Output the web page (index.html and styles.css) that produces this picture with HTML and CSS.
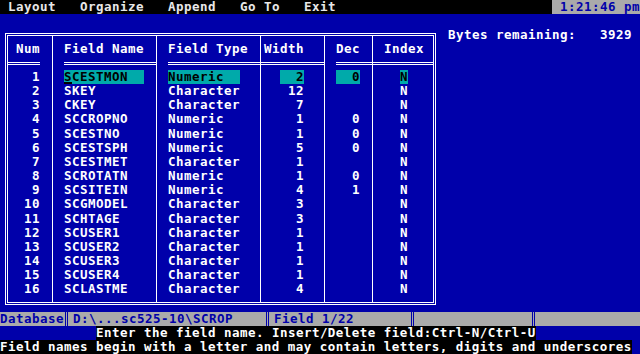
FILE: index.html
```html
<!DOCTYPE html>
<html lang="en">
<head>
    <meta charset="UTF-8">
    <title>Database Design</title>
    <link rel="stylesheet" href="styles.css">
</head>
<body>
    <div class="screen">
        <!-- Menu bar -->
        <div class="menubar">
            <span>Layout</span>
            <span>Organize</span>
            <span>Append</span>
            <span>Go To</span>
            <span>Exit</span>
            <span class="clock">1:21:46 pm</span>
        </div>

        <div class="workspace">
            <div class="field-box">
                <div class="col c-num">
                    <div class="head">Num</div>
                    <div class="rows">
                        <div>1</div><div>2</div><div>3</div><div>4</div>
                        <div>5</div><div>6</div><div>7</div><div>8</div>
                        <div>9</div><div>10</div><div>11</div><div>12</div>
                        <div>13</div><div>14</div><div>15</div><div>16</div>
                    </div>
                </div>
                <div class="col c-name">
                    <div class="head">Field Name</div>
                    <div class="rows">
                        <div><span class="hl hl-name"><span class="cursor">S</span>CESTMON</span></div>
                        <div>SKEY</div>
                        <div>CKEY</div>
                        <div>SCCROPNO</div>
                        <div>SCESTNO</div>
                        <div>SCESTSPH</div>
                        <div>SCESTMET</div>
                        <div>SCROTATN</div>
                        <div>SCSITEIN</div>
                        <div>SCGMODEL</div>
                        <div>SCHTAGE</div>
                        <div>SCUSER1</div>
                        <div>SCUSER2</div>
                        <div>SCUSER3</div>
                        <div>SCUSER4</div>
                        <div>SCLASTME</div>
                    </div>
                </div>
                <div class="col c-type">
                    <div class="head">Field Type</div>
                    <div class="rows">
                        <div><span class="hl hl-type">Numeric</span></div>
                        <div>Character</div>
                        <div>Character</div>
                        <div>Numeric</div>
                        <div>Numeric</div>
                        <div>Numeric</div>
                        <div>Character</div>
                        <div>Numeric</div>
                        <div>Numeric</div>
                        <div>Character</div>
                        <div>Character</div>
                        <div>Character</div>
                        <div>Character</div>
                        <div>Character</div>
                        <div>Character</div>
                        <div>Character</div>
                    </div>
                </div>
                <div class="col c-width">
                    <div class="head">Width</div>
                    <div class="rows">
                        <div><span class="val hl">2</span></div>
                        <div><span class="val">12</span></div>
                        <div><span class="val">7</span></div>
                        <div><span class="val">1</span></div>
                        <div><span class="val">1</span></div>
                        <div><span class="val">5</span></div>
                        <div><span class="val">1</span></div>
                        <div><span class="val">1</span></div>
                        <div><span class="val">4</span></div>
                        <div><span class="val">3</span></div>
                        <div><span class="val">3</span></div>
                        <div><span class="val">1</span></div>
                        <div><span class="val">1</span></div>
                        <div><span class="val">1</span></div>
                        <div><span class="val">1</span></div>
                        <div><span class="val">4</span></div>
                    </div>
                </div>
                <div class="col c-dec">
                    <div class="head">Dec</div>
                    <div class="rows">
                        <div><span class="val hl">0</span></div>
                        <div></div>
                        <div></div>
                        <div><span class="val">0</span></div>
                        <div><span class="val">0</span></div>
                        <div><span class="val">0</span></div>
                        <div></div>
                        <div><span class="val">0</span></div>
                        <div><span class="val">1</span></div>
                        <div></div><div></div><div></div>
                        <div></div><div></div><div></div><div></div>
                    </div>
                </div>
                <div class="col c-index">
                    <div class="head">Index</div>
                    <div class="rows">
                        <div><span class="hl">N</span></div>
                        <div>N</div><div>N</div><div>N</div><div>N</div>
                        <div>N</div><div>N</div><div>N</div><div>N</div>
                        <div>N</div><div>N</div><div>N</div><div>N</div>
                        <div>N</div><div>N</div><div>N</div>
                    </div>
                </div>
            </div>

            <div class="bytes">
                <span>Bytes remaining:</span>
                <span class="bytes-count">3929</span>
            </div>
        </div>

        <!-- Status bar -->
        <div class="statusbar">
            <span class="seg seg-mode">Database</span><span class="sep"></span>
            <span class="seg seg-file">D:\...sc525-10\SCROP</span><span class="sep"></span>
            <span class="seg seg-field">Field 1/22</span><span class="sep"></span>
            <span class="seg seg-empty"></span><span class="sep"></span>
        </div>

        <div class="message"><span class="msg-text">Enter the field name. Insert/Delete field:Ctrl-N/Ctrl-U</span></div>
        <div class="hint"><span class="msg-text">Field names begin with a letter and may contain letters, digits and underscores</span></div>
    </div>
</body>
</html>
```

FILE: styles.css
```css
/* General Styles */
* {
    box-sizing: border-box;
}

body {
    margin: 0;
    background-color: #0000aa;
}

.screen {
    width: 640px;
    height: 354px;
    display: flex;
    flex-direction: column;
    background-color: #0000aa;
    color: #ffffff;
    font-family: 'DejaVu Sans Mono', 'Liberation Mono', monospace;
    font-weight: bold;
    font-size: 12.5px;
    letter-spacing: 0.47px;
    line-height: 14.16px;
    white-space: nowrap;
    overflow: hidden;
}

/* Menu Bar */
.menubar {
    height: 14.16px;
    flex-shrink: 0;
    display: flex;
    gap: 24px;
    padding-left: 8px;
    background-color: #000000;
    color: #e8e8e8;
}

.clock {
    margin-left: auto;
    width: 88px;
    padding-left: 8px;
    background-color: #aaaaaa;
    color: #0000aa;
}

/* Work Area */
.workspace {
    height: 297.36px;
    flex-shrink: 0;
    display: flex;
    align-items: flex-start;
}

.field-box {
    display: flex;
    margin: 18.8px 0 0 5px;
    border: 3px double #ffffff;
}

.col {
    display: flex;
    flex-direction: column;
    border-left: 1px solid #ffffff;
}

.col:first-child {
    border-left: none;
}

.head {
    height: 29px;
    line-height: 26px;
    border-bottom: 3px double #ffffff;
}

.rows {
    padding: 5px 0 5.5px;
}

.rows > div {
    height: 14.16px;
}

/* Column widths */
.c-num {
    width: 44px;
    padding-right: 12px;
    text-align: right;
}

.c-name,
.c-type {
    width: 104px;
    padding-left: 11px;
}

.c-width {
    width: 64px;
}

.c-width .head {
    padding-left: 3px;
}

.c-width .rows {
    padding-left: 19px;
}

.c-dec {
    width: 48px;
    padding-left: 11px;
}

.c-index {
    width: 61px;
}

.c-index .head {
    padding-left: 11px;
}

.c-index .rows {
    padding-left: 27px;
}

.val {
    display: inline-block;
    width: 24px;
    text-align: right;
}

/* Highlighted (current) field */
.hl {
    display: inline-block;
    height: 14.16px;
    vertical-align: top;
    background-color: #00aaaa;
    color: #000000;
}

.hl-name {
    width: 80px;
}

.hl-type {
    width: 72px;
}

.cursor {
    display: inline-block;
    height: 14.16px;
    vertical-align: top;
    box-shadow: inset 0 -2px 0 #000000;
}

.bytes {
    display: flex;
    gap: 24px;
    margin: 14.16px 0 0 12px;
}

/* Status Bar */
.statusbar {
    height: 14.16px;
    flex-shrink: 0;
    display: flex;
    background-color: #aaaaaa;
    color: #0000aa;
}

.seg-mode {
    width: 64px;
}

.seg-file {
    width: 192px;
}

.seg-field {
    width: 136px;
}

.seg-empty {
    width: 112px;
}

.sep {
    width: 8px;
    margin-left: 1px;
    border-left: 3px double #0000aa;
}

/* Message Lines */
.message,
.hint {
    height: 14.16px;
    flex-shrink: 0;
}

.message {
    padding-left: 96px;
}

.msg-text {
    display: inline-block;
    height: 14.16px;
    vertical-align: top;
    background-color: #000000;
    color: #ffffff;
}
```
